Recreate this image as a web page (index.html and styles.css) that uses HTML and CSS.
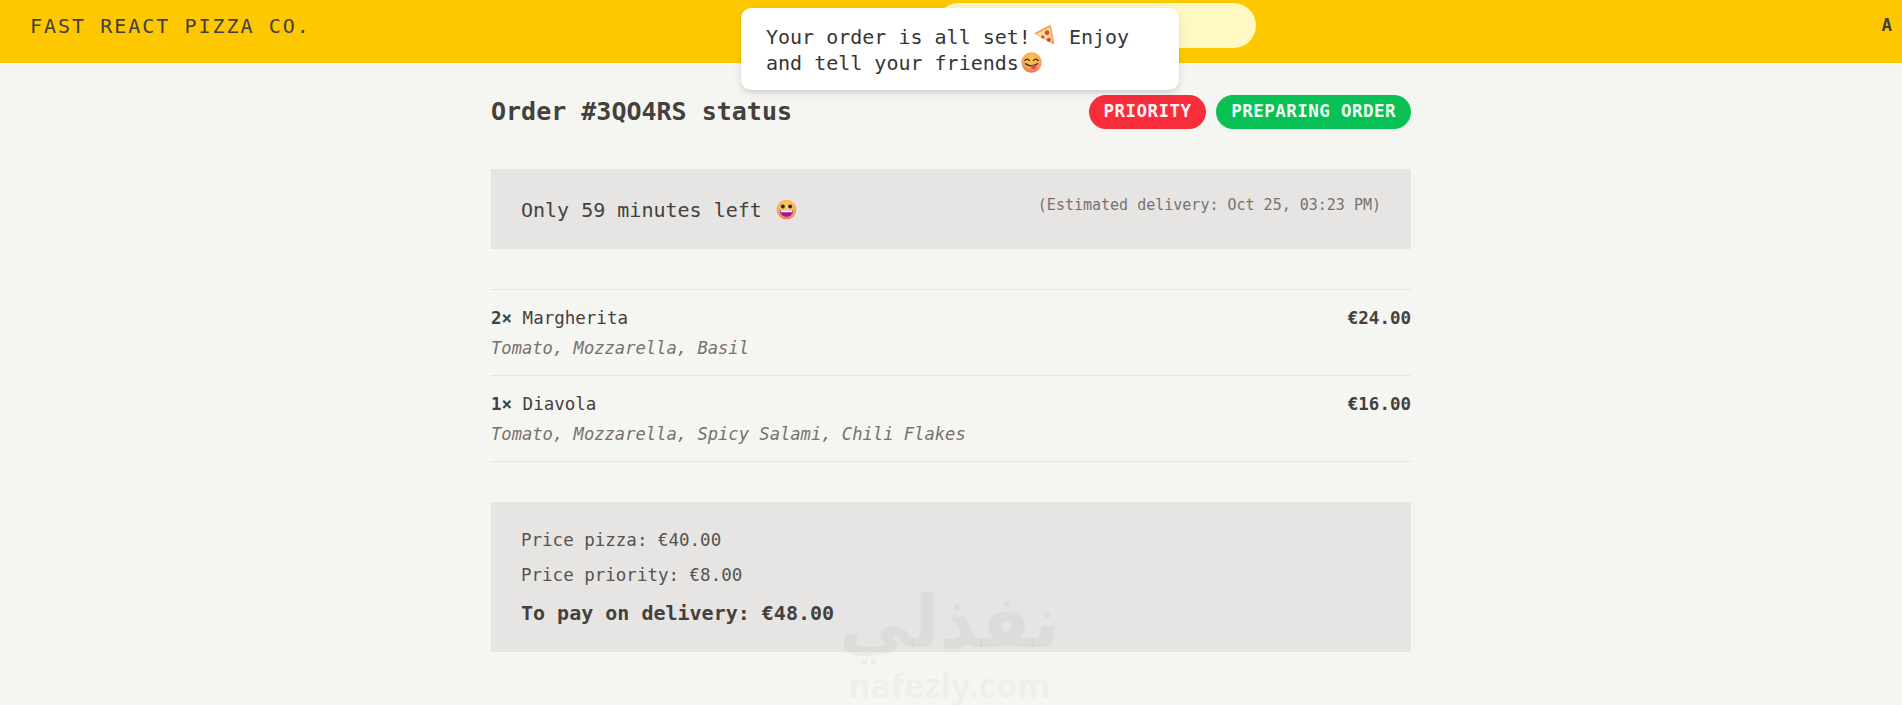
FILE: index.html
```html
<!DOCTYPE html>
<html lang="en">
<head>
    <meta charset="UTF-8">
    <meta name="viewport" content="width=device-width, initial-scale=1.0">
    <title>Fast React Pizza Co.</title>
    <link rel="stylesheet" href="styles.css">
</head>
<body>
    <header class="header">
        <a class="logo" href="#">Fast React Pizza Co.</a>
        <input class="search" type="text" aria-label="Search order">
        <span class="username">A</span>
    </header>

    <main class="order">
        <div class="order-head">
            <h2>Order #3QO4RS status</h2>
            <div class="badges">
                <span class="badge badge-red">Priority</span>
                <span class="badge badge-green">Preparing order</span>
            </div>
        </div>

        <div class="panel panel-eta">
            <p class="eta">Only 59 minutes left
                <svg class="emoji emoji-grin" viewBox="0 0 32 32">
                    <defs>
                        <radialGradient id="grinFace" cx="50%" cy="35%" r="65%">
                            <stop offset="0" stop-color="#fbd45c"/>
                            <stop offset="0.65" stop-color="#f8b257"/>
                            <stop offset="1" stop-color="#ee6f68"/>
                        </radialGradient>
                    </defs>
                    <circle cx="16" cy="16" r="15" fill="url(#grinFace)"/>
                    <circle cx="10.5" cy="11.5" r="3" fill="#3b2420"/>
                    <circle cx="21.5" cy="11.5" r="3" fill="#3b2420"/>
                    <path d="M6 17h20c0 6-4.5 10-10 10S6 23 6 17z" fill="#a3128f"/>
                    <path d="M7 17h18c0 1.500-.3 2.500-.7 3H7.700C7.300 19.500 7 18.500 7 17z" fill="#fff"/>
                </svg>
            </p>
            <p class="eta-date">(Estimated delivery: Oct 25, 03:23 PM)</p>
        </div>

        <ul class="items">
            <li class="item">
                <div class="item-row">
                    <p><span class="qty">2&times;</span> Margherita</p>
                    <p class="item-price">&euro;24.00</p>
                </div>
                <p class="ingredients">Tomato, Mozzarella, Basil</p>
            </li>
            <li class="item">
                <div class="item-row">
                    <p><span class="qty">1&times;</span> Diavola</p>
                    <p class="item-price">&euro;16.00</p>
                </div>
                <p class="ingredients">Tomato, Mozzarella, Spicy Salami, Chili Flakes</p>
            </li>
        </ul>

        <div class="panel panel-prices">
            <p class="price-line">Price pizza: &euro;40.00</p>
            <p class="price-line">Price priority: &euro;8.00</p>
            <p class="price-total">To pay on delivery: &euro;48.00</p>
        </div>
    </main>

    <div class="toast">Your order is all set!<svg class="emoji emoji-pizza" viewBox="0 0 32 32">
            <path d="M3 13 25 1.500 31 28z" fill="#f7c98b"/>
            <path d="M3 13 24 2l1.500-1.500C27 3 30 20 31 28l-3-.5z" fill="#f1a65a"/>
            <path d="M6 14 25 5l3 20z" fill="#fbdc9c"/>
            <circle cx="21" cy="12" r="3.200" fill="#d8433f"/>
            <circle cx="15" cy="18" r="2.200" fill="#d8433f"/>
            <circle cx="23.500" cy="22" r="2.800" fill="#d8433f"/>
        </svg> Enjoy and tell your friends<svg class="emoji emoji-yum" viewBox="0 0 32 32">
            <defs>
                <radialGradient id="yumFace" cx="50%" cy="35%" r="65%">
                    <stop offset="0" stop-color="#fbcb58"/>
                    <stop offset="0.7" stop-color="#f6a44f"/>
                    <stop offset="1" stop-color="#e8705c"/>
                </radialGradient>
            </defs>
            <circle cx="16" cy="16" r="15.500" fill="url(#yumFace)"/>
            <path d="M6 13c1.500-3 5-3 7 0M19 13c1.500-3 5-3 7 0" fill="none" stroke="#3b2420" stroke-width="2" stroke-linecap="round"/>
            <path d="M7 18c4 4 13 4 18 0" fill="none" stroke="#3b2420" stroke-width="2" stroke-linecap="round"/>
            <path d="M15 20.500c3 .5 6 0 8.500-1.500.5 3 0 7-4 7.500-3 .3-4.500-3-4.500-6z" fill="#e2476b"/>
        </svg></div>

    <div class="watermark">
        <span class="watermark-ar" lang="ar" dir="rtl">نفذلي</span>
        <span class="watermark-en">nafezly.com</span>
    </div>
</body>
</html>
```

FILE: styles.css
```css
* {
    box-sizing: border-box;
    margin: 0;
    padding: 0;
}
body {
    font-family: "DejaVu Sans Mono", "Liberation Mono", monospace;
    font-size: 20px;
    line-height: 30px;
    color: #44403c;
    background-color: #f5f5f2;
    position: relative;
    overflow: hidden;
    height: 705px;
}
.header {
    display: flex;
    align-items: center;
    justify-content: space-between;
    padding: 3px 10px 15px 30px;
    background-color: #fec800;
}
.logo {
    color: #44403c;
    text-decoration: none;
    text-transform: uppercase;
    letter-spacing: 2px;
    font-size: 20px;
}
.search {
    width: 320px;
    padding: 10px 20px;
    border: none;
    border-radius: 999px;
    background-color: #fef9c3;
    font-family: inherit;
    font-size: 17.5px;
    line-height: 25px;
}
.username {
    font-size: 17.5px;
    line-height: 25px;
    font-weight: bold;
}
.order {
    width: 960px;
    margin: 0 auto;
    padding: 31px 20px 30px;
    display: flex;
    flex-direction: column;
    gap: 40px;
}
.order-head {
    display: flex;
    align-items: center;
    justify-content: space-between;
}
.order-head h2 {
    font-size: 25px;
    line-height: 35px;
    font-weight: bold;
}
.badges {
    display: flex;
    gap: 10px;
}
.badge {
    padding: 4px 15px 6px;
    border-radius: 999px;
    font-size: 17.5px;
    line-height: 24px;
    font-weight: bold;
    letter-spacing: 0.44px;
    text-transform: uppercase;
    color: #fef2f2;
}
.badge-red {
    background-color: #f72d3a;
}
.badge-green {
    background-color: #08c053;
    color: #f0fdf4;
}
.panel {
    background-color: #e7e5e4;
    padding: 26px 30px 24px;
}
.panel-eta {
    display: flex;
    align-items: flex-start;
    justify-content: space-between;
}
.eta-date {
    font-size: 15px;
    line-height: 20px;
    color: #78716c;
}
.emoji {
    display: inline-block;
    vertical-align: -3px;
}
.emoji-grin {
    width: 21px;
    height: 21px;
    margin-left: 2px;
}
.emoji-pizza {
    width: 23px;
    height: 23px;
    margin: 0 2px 0 1px;
}
.emoji-yum {
    width: 21px;
    height: 21px;
    margin-left: 2px;
}
.items {
    list-style: none;
    border-top: 1px solid #e7e5e4;
    border-bottom: 1px solid #e7e5e4;
}
.item {
    padding: 16px 0 14px;
    font-size: 17.5px;
    line-height: 25px;
}
.item + .item {
    border-top: 1px solid #e7e5e4;
}
.item-row {
    display: flex;
    justify-content: space-between;
    margin-bottom: 5px;
}
.qty,
.item-price {
    font-weight: bold;
}
.ingredients {
    font-size: 17.15px;
    font-style: italic;
    color: #78716c;
}
.panel-prices {
    display: flex;
    flex-direction: column;
    gap: 10px;
}
.price-line {
    font-size: 17.5px;
    line-height: 25px;
    color: #57534e;
}
.price-total {
    font-weight: bold;
}
.toast {
    position: absolute;
    top: 8px;
    left: 741px;
    width: 438px;
    padding: 16px 26px 14px 25px;
    background: #fff;
    border-radius: 10px;
    box-shadow: 0 3px 10px rgba(0, 0, 0, 0.1), 0 3px 3px rgba(0, 0, 0, 0.05);
    line-height: 26px;
    color: #363636;
}
.watermark {
    position: absolute;
    top: 578px;
    left: 844px;
    width: 211px;
    display: flex;
    flex-direction: column;
    align-items: center;
    color: rgba(60, 50, 40, 0.05);
    font-family: "Noto Sans", "DejaVu Sans", sans-serif;
    font-weight: bold;
    pointer-events: none;
}
.watermark-ar {
    font-family: "DejaVu Sans", sans-serif;
    font-size: 72px;
    line-height: 88px;
}
.watermark-en {
    font-size: 34px;
    line-height: 38px;
}
```
